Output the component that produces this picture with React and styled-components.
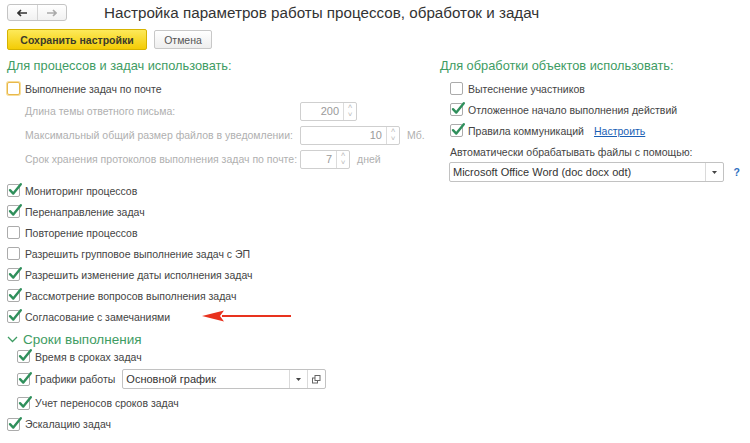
import React from 'react';
import styled, { createGlobalStyle } from 'styled-components';

const GlobalStyle = createGlobalStyle`
  body {
    margin: 0;
    background: #fff;
    font-family: Arial, 'Liberation Sans', sans-serif;
    color: #444;
  }
`;

const Page = styled.div`
  position: relative;
  width: 750px;
  height: 443px;
  padding: 4px 7px 0;
  box-sizing: border-box;
  overflow: hidden;
  font-size: 10.5px;
`;

const TopBar = styled.div`
  display: flex;
  align-items: center;
  height: 17px;
`;

const NavGroup = styled.div`
  display: flex;
  width: 60px;
  height: 17px;
  border: 1px solid #c4c4c4;
  border-radius: 3px;
  box-sizing: border-box;
  background: linear-gradient(#fff, #f1f1f1);
`;

const NavButton = styled.div`
  flex: 1;
  display: flex;
  align-items: center;
  justify-content: center;
  & + & {
    border-left: 1px solid #d4d4d4;
  }
`;

const Title = styled.h1`
  margin: 0 0 0 37px;
  font-size: 15.2px;
  font-weight: normal;
  color: #333;
  line-height: 17px;
`;

const ButtonRow = styled.div`
  display: flex;
  align-items: center;
  gap: 7px;
  margin-top: 8px;
  height: 21px;
`;

const PrimaryButton = styled.div`
  width: 140px;
  height: 21px;
  box-sizing: border-box;
  border: 1px solid #d6b300;
  border-radius: 2px;
  background: linear-gradient(#fde95a, #f3cc05);
  font-weight: bold;
  color: #3a3a2a;
  display: flex;
  align-items: center;
  justify-content: center;
`;

const PlainButton = styled.div`
  width: 58px;
  height: 19px;
  box-sizing: border-box;
  border: 1px solid #c8c8c8;
  border-radius: 2px;
  background: linear-gradient(#fff, #eee);
  color: #555;
  display: flex;
  align-items: center;
  justify-content: center;
`;

const Columns = styled.div`
  display: flex;
  margin-top: 7px;
`;

const Column = styled.div`
  width: ${p => p.width}px;
  display: flex;
  flex-direction: column;
`;

const SectionTitle = styled.div`
  font-size: 12.8px;
  color: #3e9c63;
  height: 18px;
  line-height: 18px;
  margin-bottom: 3px;
`;

const Row = styled.div`
  display: flex;
  align-items: center;
  height: ${p => p.h || 21}px;
  padding-left: ${p => p.indent || 0}px;
  margin-top: ${p => p.mt || 0}px;
  color: ${p => (p.disabled ? '#b0b0b0' : '#444')};
  white-space: nowrap;
`;

const Box = styled.span`
  position: relative;
  width: 13px;
  height: 13px;
  box-sizing: border-box;
  border: 1px solid ${p => (p.focus ? '#e8b84a' : '#ababab')};
  box-shadow: ${p => (p.focus ? '0 0 0 1px #f7dd9a' : 'none')};
  border-radius: 2px;
  background: #fff;
  margin-right: 5px;
  flex: none;
  svg {
    position: absolute;
    left: 0px;
    top: -3px;
  }
`;

const Label = styled.span`
  width: ${p => (p.width ? `${p.width}px` : 'auto')};
  flex: none;
`;

const NumberField = styled.div`
  display: flex;
  width: ${p => p.width}px;
  height: 19px;
  box-sizing: border-box;
  border: 1px solid #cfcfcf;
  border-radius: 2px;
  margin-right: 7px;
  color: #9a9a9a;
  background: #fff;
  font-size: 11px;
`;

const NumberValue = styled.div`
  flex: 1;
  text-align: right;
  padding-right: 4px;
  line-height: 17px;
`;

const Spinner = styled.div`
  width: 12px;
  border-left: 1px solid #dcdcdc;
  display: flex;
  flex-direction: column;
  align-items: center;
  justify-content: space-around;
  font-size: 8px;
  line-height: 6px;
  color: #bbb;
`;

const Select = styled.div`
  display: flex;
  width: ${p => p.width}px;
  height: 20px;
  box-sizing: border-box;
  border: 1px solid #c2c2c2;
  border-radius: 2px;
  background: #fff;
  color: #333;
  font-size: 11px;
  margin-left: ${p => p.ml || 0}px;
`;

const SelectValue = styled.div`
  flex: 1;
  padding-left: 3px;
  line-height: 18px;
`;

const SelectButton = styled.div`
  width: 17px;
  border-left: 1px solid #dadada;
  display: flex;
  align-items: center;
  justify-content: center;
  color: #555;
`;

const Link = styled.a`
  color: #1b5fb4;
  text-decoration: underline;
  margin-left: 10px;
`;

const Help = styled.span`
  color: #2e6fc0;
  font-weight: bold;
  margin-left: 10px;
`;

const GroupHeader = styled.div`
  display: flex;
  align-items: center;
  height: 18px;
  margin-top: 3px;
  font-size: 13.5px;
  color: #3e9c63;
  svg {
    margin-right: 5px;
  }
`;

const Arrow = styled.svg`
  position: absolute;
  left: 200px;
  top: 309px;
`;

const Check = ({ on, focus }) => (
  <Box focus={focus}>
    {on && (
      <svg width="15" height="15" viewBox="0 0 15 15">
        <path d="M2 8.2 L5.3 11.6 L12.8 2.2" fill="none" stroke="#2f8f5b" strokeWidth="2.4" strokeLinecap="round" strokeLinejoin="round" />
      </svg>
    )}
  </Box>
);

const CheckRow = ({ on, focus, children, indent, h, mt }) => (
  <Row indent={indent} h={h} mt={mt}>
    <Check on={on} focus={focus} />
    {children}
  </Row>
);

const Num = ({ value, width }) => (
  <NumberField width={width}>
    <NumberValue>{value}</NumberValue>
    <Spinner>
      <span>˄</span>
      <span>˅</span>
    </Spinner>
  </NumberField>
);

const DropDown = () => (
  <SelectButton>
    <svg width="5" height="3" viewBox="0 0 5 3">
      <path d="M0 0 H5 L2.5 3 Z" fill="#444" />
    </svg>
  </SelectButton>
);

const App = () => (
  <>
    <GlobalStyle />
    <Page>
      <TopBar>
        <NavGroup>
          <NavButton>
            <svg width="11" height="8" viewBox="0 0 11 8">
              <path d="M1 4 H10 M4 1 L1 4 L4 7" fill="none" stroke="#333" strokeWidth="1.6" />
            </svg>
          </NavButton>
          <NavButton>
            <svg width="11" height="8" viewBox="0 0 11 8">
              <path d="M1 4 H10 M7 1 L10 4 L7 7" fill="none" stroke="#aaa" strokeWidth="1.6" />
            </svg>
          </NavButton>
        </NavGroup>
        <Title>Настройка параметров работы процессов, обработок и задач</Title>
      </TopBar>

      <ButtonRow>
        <PrimaryButton>Сохранить настройки</PrimaryButton>
        <PlainButton>Отмена</PlainButton>
      </ButtonRow>

      <Columns>
        <Column width={433}>
          <SectionTitle>Для процессов и задач использовать:</SectionTitle>
          <CheckRow focus>Выполнение задач по почте</CheckRow>
          <Row disabled indent={18} h={24}>
            <Label width={275}>Длина темы ответного письма:</Label>
            <Num value="200" width={57} />
          </Row>
          <Row disabled indent={18} h={24}>
            <Label width={275}>Максимальный общий размер файлов в уведомлении:</Label>
            <Num value="10" width={100} />
            Мб.
          </Row>
          <Row disabled indent={18} h={24}>
            <Label width={275}>Срок хранения протоколов выполнения задач по почте:</Label>
            <Num value="7" width={50} />
            дней
          </Row>
          <CheckRow on mt={9}>Мониторинг процессов</CheckRow>
          <CheckRow on>Перенаправление задач</CheckRow>
          <CheckRow>Повторение процессов</CheckRow>
          <CheckRow>Разрешить групповое выполнение задач с ЭП</CheckRow>
          <CheckRow on>Разрешить изменение даты исполнения задач</CheckRow>
          <CheckRow on>Рассмотрение вопросов выполнения задач</CheckRow>
          <CheckRow on>Согласование с замечаниями</CheckRow>
          <GroupHeader>
            <svg width="11" height="7" viewBox="0 0 11 7">
              <path d="M1 1 L5.5 5.5 L10 1" fill="none" stroke="#3e9c63" strokeWidth="1.3" />
            </svg>
            Сроки выполнения
          </GroupHeader>
          <CheckRow on indent={10} h={17}>Время в сроках задач</CheckRow>
          <CheckRow on indent={10} h={28}>
            Графики работы
            <Select width={204} ml={7}>
              <SelectValue>Основной график</SelectValue>
              <DropDown />
              <SelectButton>
                <svg width="9" height="9" viewBox="0 0 9 9">
                  <rect x="0.5" y="3" width="5" height="5" fill="#fff" stroke="#666" />
                  <rect x="3" y="0.5" width="5" height="5" fill="#fff" stroke="#666" />
                </svg>
              </SelectButton>
            </Select>
          </CheckRow>
          <CheckRow on indent={10} h={20}>Учет переносов сроков задач</CheckRow>
          <CheckRow on h={22}>Эскалацию задач</CheckRow>
        </Column>

        <Column width={300}>
          <SectionTitle>Для обработки объектов использовать:</SectionTitle>
          <CheckRow indent={10}>Вытеснение участников</CheckRow>
          <CheckRow on indent={10}>Отложенное начало выполнения действий</CheckRow>
          <CheckRow on indent={10}>
            Правила коммуникаций
            <Link>Настроить</Link>
          </CheckRow>
          <Row indent={10}>Автоматически обрабатывать файлы с помощью:</Row>
          <Row indent={9} h={20}>
            <Select width={275}>
              <SelectValue>Microsoft Office Word (doc docx odt)</SelectValue>
              <DropDown />
            </Select>
            <Help>?</Help>
          </Row>
        </Column>
      </Columns>

      <Arrow width="92" height="14" viewBox="0 0 92 14">
        <path d="M22 7 H91" stroke="#e8321e" strokeWidth="2" />
        <path d="M2 7 L24 1.5 L20 7 L24 12.5 Z" fill="#e8321e" />
      </Arrow>
    </Page>
  </>
);

export default App;
